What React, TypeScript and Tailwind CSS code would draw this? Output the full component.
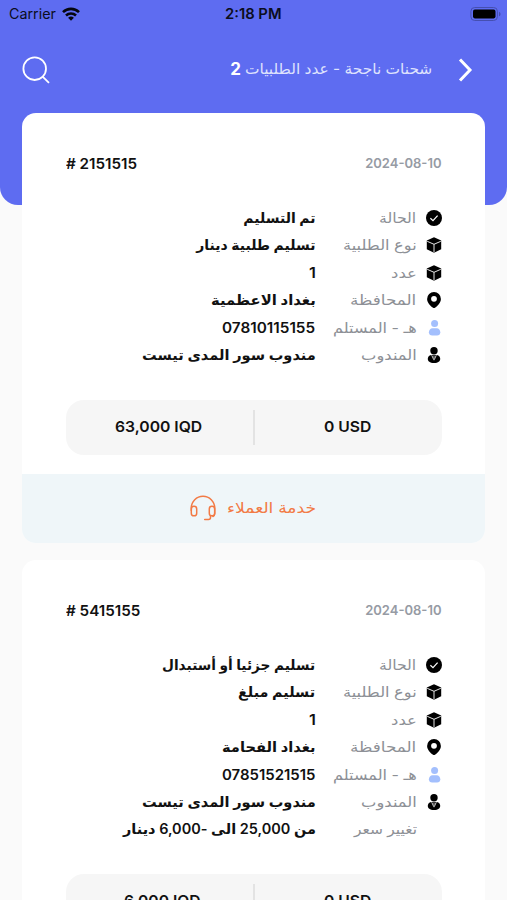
import { useLayoutEffect, useRef, useState } from "react";
import type { ReactNode } from "react";

const sans = "font-['Inter','DejaVu_Sans',sans-serif]";

type FitProps = { width: number; children: ReactNode; className?: string; from?: "right" | "left"; dir?: "rtl" | "ltr" };

// Single line of text stretched or condensed to an exact measure.
function Fit({ width, children, className = "", from = "right", dir = "rtl" }: FitProps) {
  const ref = useRef<HTMLSpanElement>(null);
  const [scale, setScale] = useState(1);
  useLayoutEffect(() => {
    if (ref.current) setScale(width / ref.current.offsetWidth);
  }, [width]);
  return (
    <span dir={from === "right" ? "rtl" : "ltr"} className={"block shrink-0 whitespace-nowrap " + className} style={{ width }}>
      <span
        ref={ref}
        dir={dir}
        className={"inline-block " + (from === "right" ? "origin-right" : "origin-left")}
        style={{ transform: `scaleX(${scale})` }}
      >
        {children}
      </span>
    </span>
  );
}

const CheckIcon = () => (
  <svg viewBox="0 0 16 16" className="size-4">
    <circle cx="8" cy="8" r="8" fill="#000" />
    <path d="M4.4 8.300 7 10.700l4.600-5" fill="none" stroke="#fff" strokeWidth="1.2" />
  </svg>
);

const BoxIcon = () => (
  <svg viewBox="0 0 16 16" className="size-4">
    <path d="M8 .3 15.2 3.6v8.6L8 15.8.8 12.2V3.6Z" fill="#000" />
    <path d="m1.2 4.3 6.8 3 6.8-3M8 7.3v8" fill="none" stroke="#fff" strokeWidth=".9" />
  </svg>
);

const PinIcon = () => (
  <svg viewBox="0 0 16 16" className="size-4">
    <path
      fillRule="evenodd"
      d="M8 0a6.9 6.9 0 0 0-6.9 6.9C1.1 10.600 4.800 14.200 6.700 15.600a2.200 2.200 0 0 0 2.600 0c1.900-1.400 5.600-5 5.600-8.700A6.900 6.900 0 0 0 8 0Zm0 3.900a2.900 2.900 0 1 1 0 5.800 2.900 2.900 0 0 1 0-5.800Z"
      fill="#000"
    />
  </svg>
);

const UserIcon = () => (
  <svg viewBox="0 0 16 16" className="size-4" fill="#a3bffd">
    <circle cx="8.600" cy="3.600" r="3.500" />
    <path d="M6.500 8.200h4.200c2.100 0 3.600 1.800 3.600 4 0 2-1.200 3.300-3.300 3.300H6.200c-2.100 0-3.300-1.300-3.300-3.300 0-2.200 1.500-4 3.600-4Z" />
  </svg>
);

const AgentIcon = () => (
  <svg viewBox="0 0 16 16" className="size-4">
    <circle cx="8" cy="3.700" r="3.700" fill="#000" />
    <path d="M5.700 7.900h4.600c2.200 0 3.900 1.700 3.900 3.900 0 2.700-1.900 4.200-6.200 4.200s-6.200-1.500-6.200-4.200c0-2.200 1.700-3.900 3.900-3.900Z" fill="#000" />
    <path d="M5.700 8.200 7.700 12.600M10.300 8.200 8.300 12.600" fill="none" stroke="#e5e5e5" strokeWidth=".9" />
    <path d="M7.300 8.500h1.400L8.500 9.700l.3 3-.8.800-.8-.8.300-3Z" fill="#999" />
  </svg>
);

const HeadsetIcon = () => (
  <svg viewBox="0 0 26 26" className="size-[26px]" fill="none" stroke="#f27a45" strokeWidth="1.500" strokeLinecap="round">
    <path d="M1.300 15.500V13a11.700 11.700 0 0 1 23.400 0v5.500c0 1.500-.6 2.500-1.800 3" />
    <rect x="1.300" y="11.300" width="5.400" height="9.500" rx="2.600" />
    <rect x="19.300" y="11.300" width="5.400" height="9.500" rx="2.600" />
    <path d="M20.500 20.800v1.600a2 2 0 0 1-2 2h-3.800" />
  </svg>
);

type Row = { icon?: ReactNode; label: string; labelWidth: number; value: string; valueWidth: number };

type Order = { id: string; idWidth: number; rows: Row[]; iqd: string; iqdWidth: number; iqdPad: string };

const orders: Order[] = [
  {
    id: "# 2151515",
    idWidth: 71,
    iqd: "63,000 IQD",
    iqdWidth: 87,
    iqdPad: "pr-px",
    rows: [
      { icon: <CheckIcon />, label: "الحالة", labelWidth: 37, value: "تم التسليم", valueWidth: 72 },
      { icon: <BoxIcon />, label: "نوع الطلبية", labelWidth: 74, value: "تسليم طلبية دينار", valueWidth: 119 },
      { icon: <BoxIcon />, label: "عدد", labelWidth: 26, value: "1", valueWidth: 7 },
      { icon: <PinIcon />, label: "المحافظة", labelWidth: 66, value: "بغداد الاعظمية", valueWidth: 105 },
      { icon: <UserIcon />, label: "هـ - المستلم", labelWidth: 84, value: "07810115155", valueWidth: 93 },
      { icon: <AgentIcon />, label: "المندوب", labelWidth: 56, value: "مندوب سور المدى تيست", valueWidth: 174 },
    ],
  },
  {
    id: "# 5415155",
    idWidth: 74,
    iqd: "6,000 IQD",
    iqdWidth: 77,
    iqdPad: "pl-[7px]",
    rows: [
      { icon: <CheckIcon />, label: "الحالة", labelWidth: 37, value: "تسليم جزئيا أو أستبدال", valueWidth: 153 },
      { icon: <BoxIcon />, label: "نوع الطلبية", labelWidth: 74, value: "تسليم مبلغ", valueWidth: 77 },
      { icon: <BoxIcon />, label: "عدد", labelWidth: 26, value: "1", valueWidth: 7 },
      { icon: <PinIcon />, label: "المحافظة", labelWidth: 66, value: "بغداد الفحامة", valueWidth: 93 },
      { icon: <UserIcon />, label: "هـ - المستلم", labelWidth: 84, value: "07851521515", valueWidth: 94 },
      { icon: <AgentIcon />, label: "المندوب", labelWidth: 56, value: "مندوب سور المدى تيست", valueWidth: 174 },
      { label: "تغيير سعر", labelWidth: 63, value: "من 25,000 الى -\u200f6,000 دينار", valueWidth: 193 },
    ],
  },
];

function OrderCard({ order }: { order: Order }) {
  return (
    <article className="shrink-0 overflow-hidden rounded-[14px] bg-white">
      <div className="px-[43.500px] pt-[41px] pb-[19px]">
        <div className="flex h-5 items-center justify-between">
          <Fit width={76} className="text-[13px] font-semibold text-[#969ba4]" dir="ltr">2024-08-10</Fit>
          <Fit width={order.idWidth} from="left" dir="ltr" className="text-[15px] font-semibold text-[#111]">{order.id}</Fit>
        </div>
        <div className="mt-[30.400px]">
          {order.rows.map((row, i) => (
            <div key={i} className="flex h-[27.400px] items-center">
              <div className="flex w-[25px] shrink-0 items-center">{row.icon}</div>
              <div className="w-[101px] shrink-0">
                <Fit width={row.labelWidth} className="text-[14px] leading-5 text-[#8d9096]">{row.label}</Fit>
              </div>
              <Fit width={row.valueWidth} className="text-[14px] leading-5 font-semibold text-[#111]">{row.value}</Fit>
            </div>
          ))}
        </div>
        <div className="mt-[31.200px] flex h-[55px] items-center rounded-[18px] bg-[#f6f6f6] text-[15px] font-semibold text-[#111]">
          <div className="flex w-[187px] justify-center">
            <Fit width={47} dir="ltr">0 USD</Fit>
          </div>
          <div className="h-[35px] w-[2px] bg-[#e3e3e3]" />
          <div className={"flex w-[187px] justify-center " + order.iqdPad}>
            <Fit width={order.iqdWidth} dir="ltr">{order.iqd}</Fit>
          </div>
        </div>
      </div>
      <div className="flex h-[69px] items-center justify-center gap-[11px] bg-[#eff6f9] pr-px">
        <Fit width={89} className="text-[15px] text-[#f27a45]">خدمة العملاء</Fit>
        <HeadsetIcon />
      </div>
    </article>
  );
}

export default function App() {
  return (
    <div dir="rtl" className={"h-[900px] w-[507px] overflow-hidden bg-[#fafafa] " + sans}>
      <header className="h-[205px] rounded-b-[18px] bg-[#5e6cf1]">
        <div dir="ltr" className="grid h-[27px] grid-cols-3 items-center px-[9px] text-[#0b0d20]">
          <div className="flex items-center gap-[6px]">
            <Fit width={47} from="left" dir="ltr" className="text-[14px]">Carrier</Fit>
            <svg viewBox="0 0 18 14" className="h-[14px] w-[18px]" fill="none" stroke="#05060f" strokeWidth="2.600">
              <path d="M1 5.100a11.600 11.600 0 0 1 16 0M4 8.500a7.300 7.300 0 0 1 10 0" />
              <path d="m9 13.800-2.900-3a4.200 4.200 0 0 1 5.800 0Z" fill="#05060f" stroke="none" />
            </svg>
          </div>
          <div className="flex justify-center">
            <Fit width={57} from="left" dir="ltr" className="text-[14px] font-semibold">2:18 PM</Fit>
          </div>
          <svg viewBox="0 0 31 14" className="mr-[-3px] h-[14px] w-[31px] justify-self-end">
            <rect x=".9" y=".5" width="26.500" height="13" rx="3.800" fill="none" stroke="#454fb0" />
            <rect x="3" y="2.600" width="22.500" height="8.800" rx="1.800" fill="#000" />
            <path d="M29 4.700v4.600c1-.4 1.500-1.300 1.500-2.300S30 5.100 29 4.700Z" fill="#454fb0" />
          </svg>
        </div>
        <div className="flex h-[86px] items-center pr-[34px] pl-[22px]">
          <svg viewBox="0 0 16 24" className="h-6 w-4" fill="none" stroke="#fff" strokeWidth="3">
            <path d="m3 1.500 10 10.500L3 22.500" />
          </svg>
          <h1 className="mr-[25px] flex items-center gap-1 pb-px">
            <Fit width={187} className="text-[15px] text-[#dfe2fd]">شحنات ناجحة - عدد الطلبيات</Fit>
            <span className="text-[17px] font-bold text-white">2</span>
          </h1>
          <svg viewBox="0 0 28 28" className="mr-auto size-7" fill="none" stroke="#fff" strokeWidth="1.800">
            <circle cx="12.700" cy="12.700" r="11.300" />
            <path d="m20.600 20.600 6.400 6.200" />
          </svg>
        </div>
      </header>
      <main className="relative mt-[-92px] flex flex-col gap-[17px] px-[22px]">
        {orders.map((order) => (
          <OrderCard key={order.id} order={order} />
        ))}
      </main>
    </div>
  );
}
